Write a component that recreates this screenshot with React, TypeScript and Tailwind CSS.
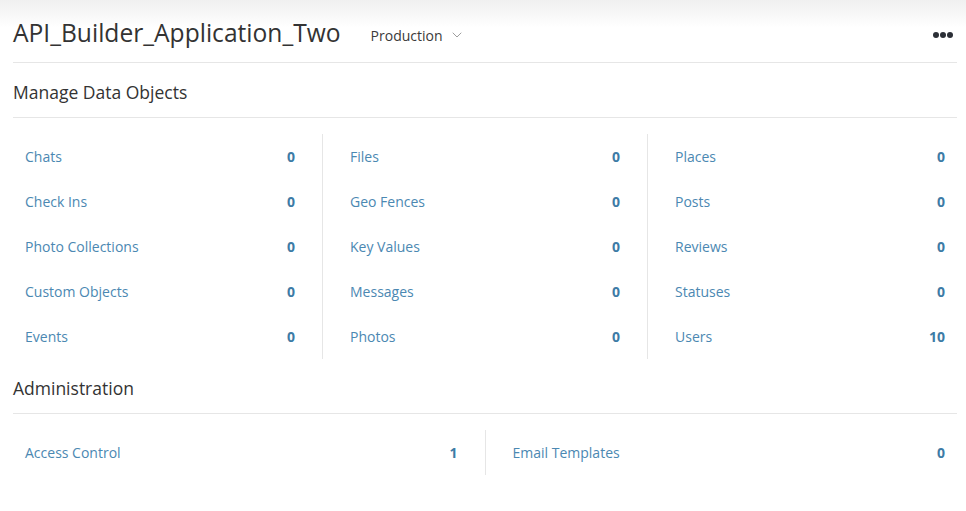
import { ChevronDown } from "lucide-react";

interface Stat {
  label: string;
  count: number;
}

const dataColumns: Stat[][] = [
  [
    { label: "Chats", count: 0 },
    { label: "Check Ins", count: 0 },
    { label: "Photo Collections", count: 0 },
    { label: "Custom Objects", count: 0 },
    { label: "Events", count: 0 },
  ],
  [
    { label: "Files", count: 0 },
    { label: "Geo Fences", count: 0 },
    { label: "Key Values", count: 0 },
    { label: "Messages", count: 0 },
    { label: "Photos", count: 0 },
  ],
  [
    { label: "Places", count: 0 },
    { label: "Posts", count: 0 },
    { label: "Reviews", count: 0 },
    { label: "Statuses", count: 0 },
    { label: "Users", count: 10 },
  ],
];

const adminColumns: Stat[][] = [
  [{ label: "Access Control", count: 1 }],
  [{ label: "Email Templates", count: 0 }],
];

const StatRow = ({ item }: { item: Stat }) => (
  <a
    href="#"
    className="flex h-[45px] items-center justify-between px-[12px] text-[14px] text-[#4b88b2]"
  >
    <span>{item.label}</span>
    <span className="font-bold text-[#3d7ba6]">{item.count}</span>
  </a>
);

const StatColumns = ({ columns }: { columns: Stat[][] }) => (
  <div className="flex">
    {columns.map((col, i) => (
      <div
        key={i}
        className={`flex-1 ${i > 0 ? "border-l border-[#e6e6e6] pl-[15px]" : ""} ${
          i < columns.length - 1 ? "pr-[15px]" : ""
        }`}
      >
        {col.map((item) => (
          <StatRow key={item.label} item={item} />
        ))}
      </div>
    ))}
  </div>
);

const SectionTitle = ({ children }: { children: string }) => (
  <h2 className="flex h-[55px] items-center border-b border-[#e6e6e6] pt-[4px] text-[17.5px] text-[#333]">
    {children}
  </h2>
);

export default function App() {
  return (
    <div
      className="min-h-screen bg-white text-[#333] bg-[linear-gradient(to_bottom,#f0f0f0,#ffffff_28px)]"
      style={{ fontFamily: '"Open Sans", sans-serif' }}
    >
      <div className="pl-[13px] pr-[9px]">
        {/* Header */}
        <div className="flex h-[63px] items-center border-b border-[#e6e6e6] pt-[4px]">
          <h1 className="text-[24.6px] leading-none text-[#333]">
            API_Builder_Application_Two
          </h1>
          <button className="ml-[30px] mt-[4px] flex items-center gap-[6px] text-[14px] text-[#3a3a3a]">
            Production
            <ChevronDown size={16} strokeWidth={1.1} className="text-[#7a7a7a]" />
          </button>
          <div className="ml-auto mr-[4px] mt-[4px] flex gap-[1px]">
            <span className="h-[6px] w-[6px] rounded-full bg-[#2b2f36]" />
            <span className="h-[6px] w-[6px] rounded-full bg-[#2b2f36]" />
            <span className="h-[6px] w-[6px] rounded-full bg-[#2b2f36]" />
          </div>
        </div>

        <SectionTitle>Manage Data Objects</SectionTitle>
        <div className="pt-[16px]">
          <StatColumns columns={dataColumns} />
        </div>

        <SectionTitle>Administration</SectionTitle>
        <div className="pt-[16px]">
          <StatColumns columns={adminColumns} />
        </div>
      </div>
    </div>
  );
}
